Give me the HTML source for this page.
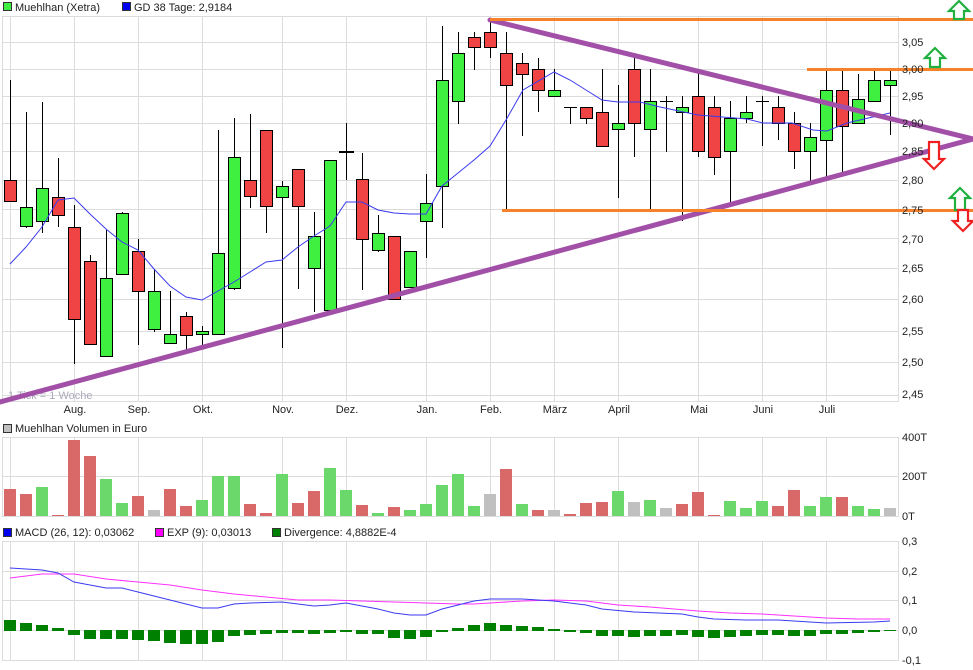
<!DOCTYPE html>
<html><head><meta charset="utf-8"><style>
html,body{margin:0;padding:0;background:#fff;width:973px;height:670px;overflow:hidden}
svg{display:block;font-family:"Liberation Sans",Arial,sans-serif}
.gl{stroke:#dcdcdc;stroke-width:1}
.w{stroke:#000;stroke-width:1}
.r{fill:#f04343;stroke:#000;stroke-width:1}
.g{fill:#40f040;stroke:#000;stroke-width:1}
.vr{fill:#d96868}.vg{fill:#6ad86a}.vy{fill:#c0c0c0}
.d{fill:#008000}
text{font-size:11px;fill:#222}
</style></head><body>
<svg width="973" height="670" viewBox="0 0 973 670">
<!-- legend -->
<rect x="3.5" y="2.5" width="8" height="8" fill="#40f040" stroke="#333"/>
<text x="15" y="11">Muehlhan (Xetra)</text>
<rect x="122.5" y="2.5" width="8" height="8" fill="#0000ee" stroke="#333"/>
<text x="134" y="11">GD 38 Tage: 2,9184</text>

<!-- main grid -->
<g class="gl">
<line x1="2" y1="16.5" x2="899" y2="16.5"/>
<line x1="2" y1="42.5" x2="899" y2="42.5"/><line x1="2" y1="69.5" x2="899" y2="69.5"/><line x1="2" y1="96.5" x2="899" y2="96.5"/><line x1="2" y1="123.5" x2="899" y2="123.5"/><line x1="2" y1="151.5" x2="899" y2="151.5"/><line x1="2" y1="180.5" x2="899" y2="180.5"/><line x1="2" y1="209.5" x2="899" y2="209.5"/><line x1="2" y1="238.5" x2="899" y2="238.5"/><line x1="2" y1="268.5" x2="899" y2="268.5"/><line x1="2" y1="299.5" x2="899" y2="299.5"/><line x1="2" y1="331.5" x2="899" y2="331.5"/><line x1="2" y1="362.5" x2="899" y2="362.5"/><line x1="2" y1="395.5" x2="899" y2="395.5"/><line x1="2" y1="401.5" x2="899" y2="401.5"/>
<line x1="2.5" y1="16" x2="2.5" y2="402"/><line x1="898.5" y1="16" x2="898.5" y2="402"/>
<line x1="10.5" y1="16" x2="10.5" y2="402"/><line x1="74.5" y1="16" x2="74.5" y2="402"/><line x1="138.5" y1="16" x2="138.5" y2="402"/><line x1="202.5" y1="16" x2="202.5" y2="402"/><line x1="282.5" y1="16" x2="282.5" y2="402"/><line x1="346.5" y1="16" x2="346.5" y2="402"/><line x1="426.5" y1="16" x2="426.5" y2="402"/><line x1="490.5" y1="16" x2="490.5" y2="402"/><line x1="554.5" y1="16" x2="554.5" y2="402"/><line x1="618.5" y1="16" x2="618.5" y2="402"/><line x1="698.5" y1="16" x2="698.5" y2="402"/><line x1="762.5" y1="16" x2="762.5" y2="402"/><line x1="826.5" y1="16" x2="826.5" y2="402"/>
</g>
<text x="8" y="399" fill="#aaa" style="fill:#aab">1 Tick = 1 Woche</text>

<!-- candles -->
<g>
<line class="w" x1="10.5" y1="80" x2="10.5" y2="202"/><rect class="r" x="4.5" y="180.5" width="12" height="21"/>
<line class="w" x1="26.5" y1="112" x2="26.5" y2="228"/><rect class="g" x="20.5" y="207.5" width="12" height="19"/>
<line class="w" x1="42.5" y1="102" x2="42.5" y2="233"/><rect class="g" x="36.5" y="188.5" width="12" height="33"/>
<line class="w" x1="58.5" y1="158" x2="58.5" y2="227"/><rect class="r" x="52.5" y="197.5" width="12" height="18"/>
<line class="w" x1="74.5" y1="205" x2="74.5" y2="364"/><rect class="r" x="68.5" y="227.5" width="12" height="92"/>
<line class="w" x1="90.5" y1="255" x2="90.5" y2="344"/><rect class="r" x="84.5" y="261.5" width="12" height="83"/>
<line class="w" x1="106.5" y1="230" x2="106.5" y2="356"/><rect class="g" x="100.5" y="278.5" width="12" height="78"/>
<line class="w" x1="122.5" y1="212" x2="122.5" y2="274"/><rect class="g" x="116.5" y="213.5" width="12" height="61"/>
<line class="w" x1="138.5" y1="239" x2="138.5" y2="345"/><rect class="r" x="132.5" y="251.5" width="12" height="40"/>
<line class="w" x1="154.5" y1="269" x2="154.5" y2="332"/><rect class="g" x="148.5" y="291.5" width="12" height="38"/>
<line class="w" x1="170.5" y1="291" x2="170.5" y2="343"/><rect class="g" x="164.5" y="334.5" width="12" height="9"/>
<line class="w" x1="186.5" y1="312" x2="186.5" y2="350"/><rect class="r" x="180.5" y="316.5" width="12" height="19"/>
<line class="w" x1="202.5" y1="326" x2="202.5" y2="345"/><rect class="g" x="196.5" y="331.5" width="12" height="3"/>
<line class="w" x1="218.5" y1="130" x2="218.5" y2="334"/><rect class="g" x="212.5" y="253.5" width="12" height="81"/>
<line class="w" x1="234.5" y1="118" x2="234.5" y2="290"/><rect class="g" x="228.5" y="157.5" width="12" height="131"/>
<line class="w" x1="250.5" y1="114" x2="250.5" y2="208"/><rect class="r" x="244.5" y="180.5" width="12" height="16"/>
<line class="w" x1="266.5" y1="130" x2="266.5" y2="233"/><rect class="r" x="260.5" y="130.5" width="12" height="76"/>
<line class="w" x1="282.5" y1="181" x2="282.5" y2="348"/><rect class="g" x="276.5" y="186.5" width="12" height="11"/>
<line class="w" x1="298.5" y1="169" x2="298.5" y2="289"/><rect class="r" x="292.5" y="169.5" width="12" height="37"/>
<line class="w" x1="314.5" y1="212" x2="314.5" y2="312"/><rect class="g" x="308.5" y="236.5" width="12" height="32"/>
<line class="w" x1="330.5" y1="160" x2="330.5" y2="310"/><rect class="g" x="324.5" y="160.5" width="12" height="150"/>
<line class="w" x1="346.5" y1="123" x2="346.5" y2="180"/><line x1="339" y1="152" x2="354" y2="152" stroke="#000" stroke-width="2"/>
<line class="w" x1="362.5" y1="153" x2="362.5" y2="290"/><rect class="r" x="356.5" y="179.5" width="12" height="60"/>
<line class="w" x1="378.5" y1="215" x2="378.5" y2="252"/><rect class="g" x="372.5" y="233.5" width="12" height="17"/>
<line class="w" x1="394.5" y1="236" x2="394.5" y2="299"/><rect class="r" x="388.5" y="236.5" width="12" height="63"/>
<line class="w" x1="410.5" y1="251" x2="410.5" y2="287"/><rect class="g" x="404.5" y="251.5" width="12" height="36"/>
<line class="w" x1="426.5" y1="174" x2="426.5" y2="258"/><rect class="g" x="420.5" y="203.5" width="12" height="18"/>
<line class="w" x1="442.5" y1="26" x2="442.5" y2="228"/><rect class="g" x="436.5" y="80.5" width="12" height="106"/>
<line class="w" x1="458.5" y1="32" x2="458.5" y2="124"/><rect class="g" x="452.5" y="53.5" width="12" height="48"/>
<line class="w" x1="474.5" y1="32" x2="474.5" y2="70"/><rect class="r" x="468.5" y="37.5" width="12" height="10"/>
<line class="w" x1="490.5" y1="20" x2="490.5" y2="58"/><rect class="r" x="484.5" y="32.5" width="12" height="15"/>
<line class="w" x1="506.5" y1="32" x2="506.5" y2="210"/><rect class="r" x="500.5" y="53.5" width="12" height="32"/>
<line class="w" x1="522.5" y1="53" x2="522.5" y2="136"/><rect class="r" x="516.5" y="63.5" width="12" height="11"/>
<line class="w" x1="538.5" y1="58" x2="538.5" y2="112"/><rect class="r" x="532.5" y="69.5" width="12" height="21"/>
<line class="w" x1="554.5" y1="69" x2="554.5" y2="96"/><rect class="g" x="548.5" y="90.5" width="12" height="6"/>
<line class="w" x1="570.5" y1="107" x2="570.5" y2="124"/><line class="w" x1="564" y1="107.5" x2="577" y2="107.5"/>
<line class="w" x1="586.5" y1="107" x2="586.5" y2="124"/><rect class="r" x="580.5" y="107.5" width="12" height="11"/>
<line class="w" x1="602.5" y1="69" x2="602.5" y2="146"/><rect class="r" x="596.5" y="112.5" width="12" height="34"/>
<line class="w" x1="618.5" y1="85" x2="618.5" y2="198"/><rect class="g" x="612.5" y="123.5" width="12" height="6"/>
<line class="w" x1="634.5" y1="53" x2="634.5" y2="157"/><rect class="r" x="628.5" y="69.5" width="12" height="54"/>
<line class="w" x1="650.5" y1="69" x2="650.5" y2="210"/><rect class="g" x="644.5" y="101.5" width="12" height="28"/>
<line class="w" x1="666.5" y1="96" x2="666.5" y2="152"/><line class="w" x1="660" y1="101.5" x2="673" y2="101.5"/>
<line class="w" x1="682.5" y1="96" x2="682.5" y2="221"/><rect class="g" x="676.5" y="107.5" width="12" height="5"/>
<line class="w" x1="698.5" y1="69" x2="698.5" y2="157"/><rect class="r" x="692.5" y="96.5" width="12" height="55"/>
<line class="w" x1="714.5" y1="96" x2="714.5" y2="175"/><rect class="r" x="708.5" y="107.5" width="12" height="50"/>
<line class="w" x1="730.5" y1="101" x2="730.5" y2="205"/><rect class="g" x="724.5" y="118.5" width="12" height="33"/>
<line class="w" x1="746.5" y1="96" x2="746.5" y2="123"/><rect class="g" x="740.5" y="112.5" width="12" height="6"/>
<line class="w" x1="762.5" y1="96" x2="762.5" y2="146"/><line class="w" x1="756" y1="101.5" x2="769" y2="101.5"/>
<line class="w" x1="778.5" y1="96" x2="778.5" y2="140"/><rect class="r" x="772.5" y="107.5" width="12" height="16"/>
<line class="w" x1="794.5" y1="112" x2="794.5" y2="169"/><rect class="r" x="788.5" y="123.5" width="12" height="28"/>
<line class="w" x1="810.5" y1="123" x2="810.5" y2="181"/><rect class="g" x="804.5" y="137.5" width="12" height="14"/>
<line class="w" x1="826.5" y1="69" x2="826.5" y2="177"/><rect class="g" x="820.5" y="90.5" width="12" height="50"/>
<line class="w" x1="842.5" y1="69" x2="842.5" y2="173"/><rect class="r" x="836.5" y="90.5" width="12" height="36"/>
<line class="w" x1="858.5" y1="74" x2="858.5" y2="123"/><rect class="g" x="852.5" y="99.5" width="12" height="24"/>
<line class="w" x1="874.5" y1="69" x2="874.5" y2="101"/><rect class="g" x="868.5" y="80.5" width="12" height="21"/>
<line class="w" x1="890.5" y1="69" x2="890.5" y2="135"/><rect class="g" x="884.5" y="80.5" width="12" height="5"/>
</g>

<!-- MA line -->
<polyline fill="none" stroke="#3a3af0" stroke-width="1" points="10,264 26,247 42,227 58,200 74,198 90,214 106,229 122,242 138,250 154,269 170,286 186,297 202,300 218,291 234,282 250,272 266,262 282,260 298,247 314,236 330,226 346,202 362,202 378,210 394,213 410,214 426,214 442,186 458,173 474,160 490,146 506,120 523,90 554,72 570,80 586,90 602,100 618,102 640,102 660,107 698,115 747,119 763,123 792,123 813,130 827,131 847,123 890,113"/>

<!-- trend lines -->
<g stroke="#a24fa8" stroke-width="5" stroke-linecap="round">
<line x1="490" y1="20" x2="973" y2="139"/>
<line x1="0" y1="402" x2="973" y2="139"/>
</g>
<g stroke="#f5822a" stroke-width="3">
<line x1="490" y1="19.5" x2="973" y2="19.5"/>
<line x1="807" y1="69.5" x2="973" y2="69.5"/>
<line x1="502" y1="210.5" x2="973" y2="210.5"/>
</g>
<!-- arrows -->
<g fill="#fff" stroke-width="2.2" stroke-linejoin="miter">
<path d="M959,1 L949,11 L954,11 L954,19 L964,19 L964,11 L969,11 Z" stroke="#20b040"/>
<path d="M935,48 L925,58 L930,58 L930,67 L940,67 L940,58 L945,58 Z" stroke="#20b040"/>
<path d="M960,188 L950,198 L955,198 L955,210 L965,210 L965,198 L970,198 Z" stroke="#20b040"/>
<path d="M934,169 L924,159 L929,159 L929,142 L939,142 L939,159 L944,159 Z" stroke="#ee2020"/>
<path d="M963,231 L953,221 L958,221 L958,210 L968,210 L968,221 L973,221 Z" stroke="#ee2020"/>
</g>

<!-- price labels -->
<g>
<text x="902" y="46">3,05</text><text x="902" y="73">3,00</text><text x="902" y="100">2,95</text><text x="902" y="127">2,90</text><text x="902" y="155">2,85</text><text x="902" y="184">2,80</text><text x="902" y="214">2,75</text><text x="902" y="243">2,70</text><text x="902" y="272">2,65</text><text x="902" y="303">2,60</text><text x="902" y="335">2,55</text><text x="902" y="366">2,50</text><text x="902" y="398">2,45</text>
</g>
<g text-anchor="middle">
<text x="75" y="413">Aug.</text><text x="139" y="413">Sep.</text><text x="203" y="413">Okt.</text><text x="283" y="413">Nov.</text><text x="347" y="413">Dez.</text><text x="427" y="413">Jan.</text><text x="491" y="413">Feb.</text><text x="555" y="413">März</text><text x="619" y="413">April</text><text x="699" y="413">Mai</text><text x="763" y="413">Juni</text><text x="827" y="413">Juli</text>
</g>

<!-- volume -->
<rect x="3.5" y="424.5" width="8" height="8" fill="#c0c0c0" stroke="#333"/>
<text x="15" y="432">Muehlhan Volumen in Euro</text>
<g class="gl">
<line x1="2" y1="437.5" x2="899" y2="437.5"/><line x1="2" y1="476.5" x2="899" y2="476.5"/><line x1="2" y1="516.5" x2="899" y2="516.5"/>
<line x1="2.5" y1="437" x2="2.5" y2="517"/><line x1="898.5" y1="437" x2="898.5" y2="517"/>
<line x1="10.5" y1="437" x2="10.5" y2="517"/><line x1="74.5" y1="437" x2="74.5" y2="517"/><line x1="138.5" y1="437" x2="138.5" y2="517"/><line x1="202.5" y1="437" x2="202.5" y2="517"/><line x1="282.5" y1="437" x2="282.5" y2="517"/><line x1="346.5" y1="437" x2="346.5" y2="517"/><line x1="426.5" y1="437" x2="426.5" y2="517"/><line x1="490.5" y1="437" x2="490.5" y2="517"/><line x1="554.5" y1="437" x2="554.5" y2="517"/><line x1="618.5" y1="437" x2="618.5" y2="517"/><line x1="698.5" y1="437" x2="698.5" y2="517"/><line x1="762.5" y1="437" x2="762.5" y2="517"/><line x1="826.5" y1="437" x2="826.5" y2="517"/>
</g>
<g>
<rect class="vr" x="4" y="489" width="12" height="27"/><rect class="vr" x="20" y="494" width="12" height="22"/><rect class="vg" x="36" y="487" width="12" height="29"/><rect class="vr" x="52" y="515" width="12" height="1"/><rect class="vr" x="68" y="440" width="12" height="76"/><rect class="vr" x="84" y="456" width="12" height="60"/><rect class="vg" x="100" y="479" width="12" height="37"/><rect class="vg" x="116" y="503" width="12" height="13"/><rect class="vr" x="132" y="496" width="12" height="20"/><rect class="vy" x="148" y="510" width="12" height="6"/><rect class="vr" x="164" y="489" width="12" height="27"/><rect class="vr" x="180" y="506" width="12" height="10"/><rect class="vg" x="196" y="500" width="12" height="16"/><rect class="vg" x="212" y="476" width="12" height="40"/><rect class="vg" x="228" y="476" width="12" height="40"/><rect class="vr" x="244" y="504" width="12" height="12"/><rect class="vr" x="260" y="513" width="12" height="3"/><rect class="vg" x="276" y="474" width="12" height="42"/><rect class="vr" x="292" y="503" width="12" height="13"/><rect class="vr" x="308" y="491" width="12" height="25"/><rect class="vg" x="324" y="468" width="12" height="48"/><rect class="vg" x="340" y="490" width="12" height="26"/><rect class="vr" x="356" y="505" width="12" height="11"/><rect class="vg" x="372" y="513" width="12" height="3"/><rect class="vr" x="388" y="507" width="12" height="9"/><rect class="vg" x="404" y="510" width="12" height="6"/><rect class="vg" x="420" y="504" width="12" height="12"/><rect class="vg" x="436" y="485" width="12" height="31"/><rect class="vg" x="452" y="474" width="12" height="42"/><rect class="vg" x="468" y="506" width="12" height="10"/><rect class="vy" x="484" y="494" width="12" height="22"/><rect class="vr" x="500" y="469" width="12" height="47"/><rect class="vg" x="516" y="504" width="12" height="12"/><rect class="vr" x="532" y="510" width="12" height="6"/><rect class="vy" x="548" y="510" width="12" height="6"/><rect class="vr" x="564" y="514" width="12" height="2"/><rect class="vr" x="580" y="503" width="12" height="13"/><rect class="vr" x="596" y="502" width="12" height="14"/><rect class="vg" x="612" y="491" width="12" height="25"/><rect class="vy" x="628" y="502" width="12" height="14"/><rect class="vg" x="644" y="500" width="12" height="16"/><rect class="vy" x="660" y="508" width="12" height="8"/><rect class="vr" x="676" y="504" width="12" height="12"/><rect class="vr" x="692" y="492" width="12" height="24"/><rect class="vr" x="708" y="515" width="12" height="1"/><rect class="vg" x="724" y="501" width="12" height="15"/><rect class="vg" x="740" y="508" width="12" height="8"/><rect class="vg" x="756" y="501" width="12" height="15"/><rect class="vr" x="772" y="506" width="12" height="10"/><rect class="vr" x="788" y="490" width="12" height="26"/><rect class="vg" x="804" y="506" width="12" height="10"/><rect class="vg" x="820" y="497" width="12" height="19"/><rect class="vr" x="836" y="497" width="12" height="19"/><rect class="vg" x="852" y="506" width="12" height="10"/><rect class="vg" x="868" y="509" width="12" height="7"/><rect class="vy" x="884" y="508" width="12" height="8"/>
</g>
<text x="902" y="441">400T</text><text x="902" y="480">200T</text><text x="902" y="520">0T</text>

<!-- MACD -->
<rect x="3.5" y="528.5" width="8" height="8" fill="#0000ee" stroke="#333"/>
<text x="15" y="536">MACD (26, 12): 0,03062</text>
<rect x="155.5" y="528.5" width="8" height="8" fill="#ff00ff" stroke="#333"/>
<text x="167" y="536">EXP (9): 0,03013</text>
<rect x="272.5" y="528.5" width="8" height="8" fill="#008000" stroke="#333"/>
<text x="284" y="536">Divergence: 4,8882E-4</text>
<g class="gl">
<line x1="2" y1="541.5" x2="899" y2="541.5"/><line x1="2" y1="571.5" x2="899" y2="571.5"/><line x1="2" y1="600.5" x2="899" y2="600.5"/><line x1="2" y1="630.5" x2="899" y2="630.5"/><line x1="2" y1="660.5" x2="899" y2="660.5"/>
<line x1="2.5" y1="541" x2="2.5" y2="661"/><line x1="898.5" y1="541" x2="898.5" y2="661"/>
<line x1="10.5" y1="541" x2="10.5" y2="661"/><line x1="74.5" y1="541" x2="74.5" y2="661"/><line x1="138.5" y1="541" x2="138.5" y2="661"/><line x1="202.5" y1="541" x2="202.5" y2="661"/><line x1="282.5" y1="541" x2="282.5" y2="661"/><line x1="346.5" y1="541" x2="346.5" y2="661"/><line x1="426.5" y1="541" x2="426.5" y2="661"/><line x1="490.5" y1="541" x2="490.5" y2="661"/><line x1="554.5" y1="541" x2="554.5" y2="661"/><line x1="618.5" y1="541" x2="618.5" y2="661"/><line x1="698.5" y1="541" x2="698.5" y2="661"/><line x1="762.5" y1="541" x2="762.5" y2="661"/><line x1="826.5" y1="541" x2="826.5" y2="661"/>
</g>
<g class="d">
<rect x="4" y="620" width="12" height="11"/><rect x="20" y="623" width="12" height="8"/><rect x="36" y="625" width="12" height="6"/><rect x="52" y="628" width="12" height="3"/><rect x="68" y="630" width="12" height="5"/><rect x="84" y="630" width="12" height="9"/><rect x="100" y="630" width="12" height="9"/><rect x="116" y="630" width="12" height="9"/><rect x="132" y="630" width="12" height="10"/><rect x="148" y="630" width="12" height="11"/><rect x="164" y="630" width="12" height="13"/><rect x="180" y="630" width="12" height="14"/><rect x="196" y="630" width="12" height="14"/><rect x="212" y="630" width="12" height="12"/><rect x="228" y="630" width="12" height="6"/><rect x="244" y="630" width="12" height="5"/><rect x="260" y="630" width="12" height="4"/><rect x="276" y="630" width="12" height="3"/><rect x="292" y="630" width="12" height="3"/><rect x="308" y="630" width="12" height="4"/><rect x="324" y="630" width="12" height="3"/><rect x="340" y="630" width="12" height="2"/><rect x="356" y="630" width="12" height="4"/><rect x="372" y="630" width="12" height="4"/><rect x="388" y="630" width="12" height="8"/><rect x="404" y="630" width="12" height="9"/><rect x="420" y="630" width="12" height="7"/><rect x="436" y="630" width="12" height="2"/><rect x="452" y="628" width="12" height="3"/><rect x="468" y="625" width="12" height="6"/><rect x="484" y="623" width="12" height="8"/><rect x="500" y="625" width="12" height="6"/><rect x="516" y="626" width="12" height="5"/><rect x="532" y="627" width="12" height="4"/><rect x="548" y="629" width="12" height="2"/><rect x="564" y="630" width="12" height="2"/><rect x="580" y="630" width="12" height="3"/><rect x="596" y="630" width="12" height="6"/><rect x="612" y="630" width="12" height="6"/><rect x="628" y="630" width="12" height="7"/><rect x="644" y="630" width="12" height="6"/><rect x="660" y="630" width="12" height="6"/><rect x="676" y="630" width="12" height="5"/><rect x="692" y="630" width="12" height="7"/><rect x="708" y="630" width="12" height="8"/><rect x="724" y="630" width="12" height="7"/><rect x="740" y="630" width="12" height="6"/><rect x="756" y="630" width="12" height="5"/><rect x="772" y="630" width="12" height="5"/><rect x="788" y="630" width="12" height="6"/><rect x="804" y="630" width="12" height="6"/><rect x="820" y="630" width="12" height="4"/><rect x="836" y="630" width="12" height="4"/><rect x="852" y="630" width="12" height="3"/><rect x="868" y="630" width="12" height="2"/><rect x="884" y="630" width="12" height="1"/>
</g>
<polyline fill="none" stroke="#ff30ff" stroke-width="1" points="10,578 42,574 74,574 106,579 138,582 170,585 202,590 234,594 266,597 298,600 330,600 362,601 394,602 426,603 458,604 474,604 490,603 522,601 554,600 586,601 618,605 650,607 698,611 730,613 762,614 794,616 826,618 858,619 890,619"/>
<polyline fill="none" stroke="#3a3af0" stroke-width="1" points="10,568 42,570 58,573 74,582 90,585 106,588 122,588 138,592 154,596 170,600 186,604 202,608 218,608 234,604 250,603 282,602 298,604 314,606 330,605 346,603 362,606 378,609 394,613 410,615 426,615 442,609 458,605 474,601 490,599 522,599 554,601 586,605 602,609 634,612 682,614 698,617 714,619 746,620 778,620 810,622 826,623 874,622 890,621"/>
<text x="902" y="545">0,3</text><text x="902" y="575">0,2</text><text x="902" y="604">0,1</text><text x="902" y="634">0,0</text><text x="902" y="664">-0,1</text>
</svg>
</body></html>
